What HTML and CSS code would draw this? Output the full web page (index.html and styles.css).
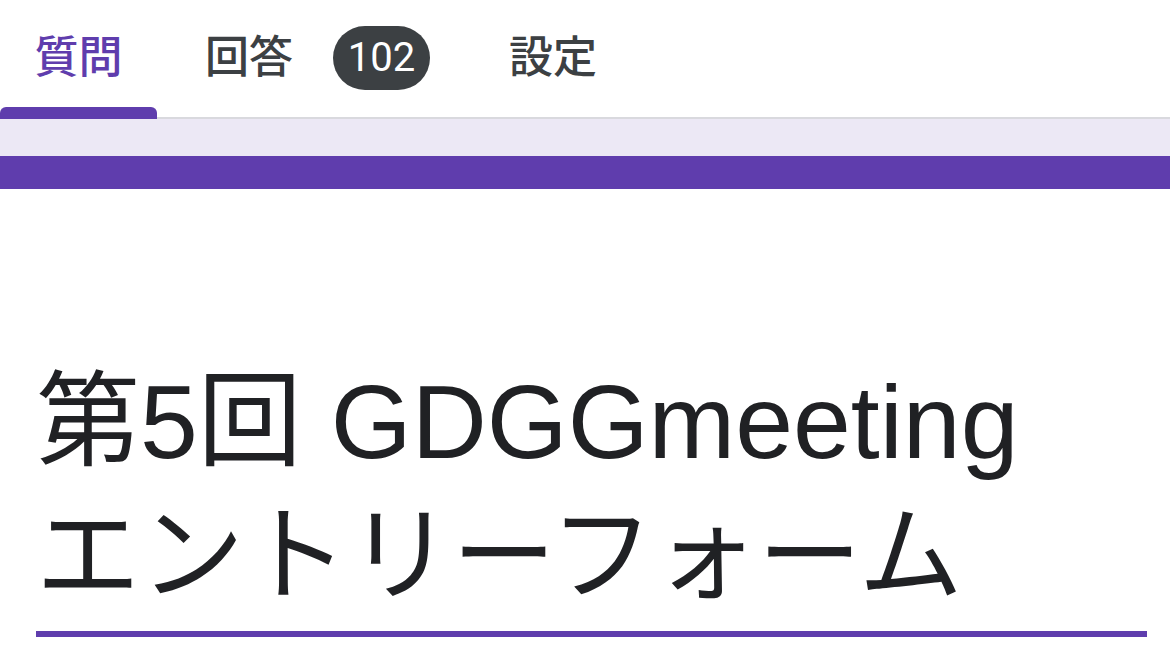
FILE: index.html
```html
<!DOCTYPE html>
<html lang="ja">
<head>
<meta charset="utf-8">
<title>第5回 GDGGmeeting エントリーフォーム</title>
<link rel="stylesheet" href="styles.css">
</head>
<body>
  <nav class="tabs">
    <div class="tab tab-active">質問</div>
    <div class="tab tab-responses">回答<span class="badge">102</span></div>
    <div class="tab tab-settings">設定</div>
  </nav>
  <div class="tint-band"></div>
  <div class="accent-band"></div>
  <main class="card">
    <h1 class="form-title">第5回 <span class="latin">GDGGmeeting</span><br>エントリーフォーム</h1>
  </main>
</body>
</html>
```

FILE: styles.css
```css
html, body {
  margin: 0;
  padding: 0;
  background: #ffffff;
}

body {
  width: 1170px;
  height: 663px;
  overflow: hidden;
  font-family: "Noto Sans CJK JP", "Noto Sans", sans-serif;
}

.tabs {
  display: flex;
  align-items: center;
  padding-bottom: 10px;
  height: 107px;
  border-bottom: 2px solid #d9d9de;
}

.tab {
  position: relative;
  display: flex;
  align-items: center;
  font-size: 44px;
  line-height: 44px;
  font-weight: 500;
  color: #3c4043;
  white-space: nowrap;
}

.tab-active {
  width: 157px;
  justify-content: center;
  color: #5f3dad;
  height: 107px;
}

.tab-active::after {
  content: "";
  position: absolute;
  left: 0;
  right: 0;
  bottom: -12px;
  height: 12px;
  background: #5f3dad;
  border-radius: 6px 6px 0 0;
}

.tab-responses {
  margin-left: 48px;
}

.badge {
  display: inline-flex;
  align-items: center;
  justify-content: center;
  margin-left: 40px;
  margin-top: 8px;
  width: 97px;
  height: 64px;
  border-radius: 32px;
  background: #3c4043;
  color: #ffffff;
  font-family: Roboto, "Noto Sans", sans-serif;
  font-weight: 400;
  font-size: 40px;
  line-height: 1;
}

.tab-settings {
  margin-left: 79px;
}

.tint-band {
  height: 37px;
  background: #ece8f5;
}

.accent-band {
  height: 33px;
  background: #5f3dad;
}

.card {
  padding: 166px 23px 0 36px;
}

.form-title {
  margin: 0;
  padding-bottom: 8px;
  border-bottom: 6px solid #5f3dad;
  font-family: "Liberation Sans", "Noto Sans CJK JP", sans-serif;
  font-weight: 400;
  font-size: 104px;
  line-height: 134px;
  color: #202124;
  white-space: nowrap;
}

.latin {
  letter-spacing: 0;
}
```
